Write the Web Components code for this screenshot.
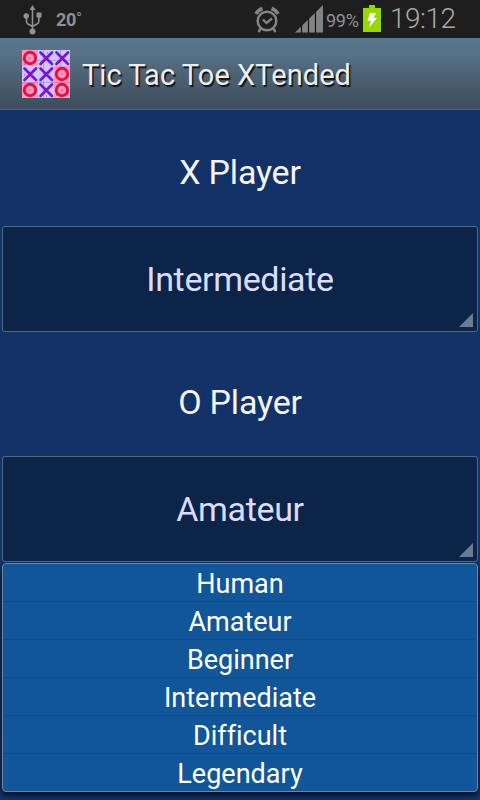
<!DOCTYPE html>
<html lang="en"><head><meta charset="utf-8"><title>Tic Tac Toe XTended</title>
<style>
html,body{margin:0;height:100%}
body{font-family:Roboto,"Liberation Sans",sans-serif;font-variant-ligatures:none;background:#123166;overflow:hidden}
</style></head><body>
<ttt-app></ttt-app>
<script>
const define=(name,html,init)=>customElements.define(name,class extends HTMLElement{
  constructor(){super();this.attachShadow({mode:'open'}).innerHTML=html;}
  connectedCallback(){if(init)init(this,this.shadowRoot);}
});

define('status-bar',`<style>
:host{display:flex;height:38px;background:#1e1e1e;color:#919191;align-items:center;box-sizing:border-box;padding-left:23px;padding-right:23px}
svg{display:block;flex:none}
.temp{font-size:18px;font-weight:700;line-height:38px;margin-left:14px;letter-spacing:-.3px;padding-top:2px}
.gap{flex:1}
.pct{font-size:18px;margin-left:2px;padding-top:2px;letter-spacing:-.3px;width:37px;white-space:nowrap}
.time{font-size:28px;line-height:38px;margin-left:9px;width:67px;white-space:nowrap;letter-spacing:-.5px;font-weight:300;color:#aaa}
</style>
<svg width="19" height="31" viewBox="0 0 19 31" fill="none" stroke="#919191" stroke-width="1.6"><path d="M9.500 5V27M3.500 12V17.500Q3.500 19 5 20L9.500 22.500L14 20Q15.800 19 15.800 17.500V11"/><g fill="#919191" stroke="none"><path d="M9.500 1L12.500 6H6.500Z"/><circle cx="3.200" cy="12" r="2.700"/><rect x="13.500" y="8.500" width="5" height="5"/><circle cx="9.500" cy="27.500" r="3"/></g></svg>
<span class="temp">20˚</span><span class="gap"></span>
<svg width="26" height="28" viewBox="0 0 26 28" fill="none" stroke="#838383" stroke-width="2.500"><circle cx="13" cy="16" r="9.300"/><path d="M9 14.500L12.500 18L18 13.500" stroke-width="2.400"/><path d="M2 9Q4 5 8.500 3.500M24 9Q22 5 17.500 3.500" stroke-width="3.600"/><path d="M7 23L4.500 27M19 23L21.500 27"/></svg>
<svg width="29" height="28" viewBox="0 0 29 28" style="margin-left:15px"><path d="M0 27.500L28 0V27.500Z" fill="#838383"/><path d="M6.500 18V28M13.500 12V28M20.500 5V28" stroke="#151515" stroke-width="1.200"/></svg>
<span class="pct">99%</span>
<svg width="18" height="28" viewBox="0 0 18 28"><path d="M6 0H12V3H18V27H0V3H6Z" fill="#96d800"/><path d="M7 8H13L10.500 13H14L6 22.500L8 16H4.500Z" fill="#fff"/></svg>
<span class="time">19:12</span>`);

define('board-icon',`<style>:host{display:block;width:48px;height:48px}svg{display:block}</style><svg width="48" height="48" viewBox="0 0 48 48"></svg>`,(h,r)=>{
  let out='';
  [...'OXXXXOOXO'].forEach((c,i)=>{
    const x=i%3*16,y=Math.floor(i/3)*16;
    out+=`<rect x="${x}" y="${y}" width="16" height="16" fill="${c==='O'?'#ff96c3':'#cdc8fa'}"/>`;
  });
  out+='<path d="M0 10.500H48M0 32.500H48M21.500 0V48M38.500 0V48" stroke="#6c6790" stroke-opacity=".35"/>';
  [...'OXXXXOOXO'].forEach((c,i)=>{
    const x=i%3*16,y=Math.floor(i/3)*16;
    out+=`<g transform="translate(${x} ${y})">`+
    (c==='O'?'<circle cx="8" cy="8" r="5.700" fill="#ff96c3" stroke="#e5103f" stroke-width="2.900"/><circle cx="8" cy="8" r="1" fill="#ee5f91"/>'
    :'<path d="M2.500 2.500L14 14M14 2.500L2.500 14" stroke="#7d10db" stroke-width="2.700" stroke-linecap="round"/>')+'</g>';
  });
  out+='<path d="M25 3h1M38 7h1M2 25h1M29 29h1M45 45h1M24 46h1" stroke="#d42675"/><path d="M2 14h1M18 13h1M34 13h1M34 45h1" stroke="#382aa8"/>';
  r.querySelector('svg').innerHTML=out;
});

define('title-bar',`<style>
:host{display:flex;align-items:center;height:72px;box-sizing:border-box;padding:0 0 0 22px;background:linear-gradient(#5a768c,#587287 20%,#3e4e5d 95%);border-bottom:1px solid #4d6675}
span{margin-left:12px;padding-top:2px;font-size:29px;color:#eee;text-shadow:1.500px 1.500px 1px #111;white-space:nowrap;letter-spacing:.05px}
</style><board-icon></board-icon><span><slot></slot></span>`);

define('player-label',`<style>
:host{display:block;height:116px;line-height:125px;text-align:center;color:#f4f4f6;font-size:34px;letter-spacing:-.2px;white-space:nowrap}
:host([low]){height:124px;line-height:141px}
</style><slot></slot>`);

define('level-spinner',`<style>
:host{display:block;position:relative;height:106px;margin:0 2px;box-sizing:border-box;border:1px solid #4c6b83;border-radius:3px;background:#0b2448;color:#dcdcff;text-align:center;font-size:34px;line-height:104px;letter-spacing:-.35px;white-space:nowrap}
i{position:absolute;right:4px;bottom:4px;width:14px;height:14px;background:#677d94;clip-path:polygon(100% 0,100% 100%,0 100%)}
</style><slot></slot><i></i>`);

define('level-option',`<style>
:host{display:block;height:37px;border-bottom:1px solid #24476a;line-height:40px;font-size:27px;color:#fff;text-align:center;white-space:nowrap}
:host(:last-child){border-bottom:0}
</style><slot></slot>`);

define('level-menu',`<style>
:host{display:block;margin:1px 2px 0;height:229px;box-sizing:border-box;background:#115698;border:1px solid #7b8290;border-radius:4px;box-shadow:0 3px 6px #020b1e;}
</style><slot></slot>`);

define('ttt-app',`<style>:host{display:block;width:480px;height:800px;overflow:hidden;background:linear-gradient(#123166,#143468)}</style>
<status-bar></status-bar><title-bar>Tic Tac Toe XTended</title-bar>
<player-label>X Player</player-label><level-spinner>Intermediate</level-spinner>
<player-label low>O Player</player-label><level-spinner>Amateur</level-spinner>
<level-menu><level-option>Human</level-option><level-option>Amateur</level-option><level-option>Beginner</level-option><level-option>Intermediate</level-option><level-option>Difficult</level-option><level-option>Legendary</level-option></level-menu>`);
</script></body></html>
